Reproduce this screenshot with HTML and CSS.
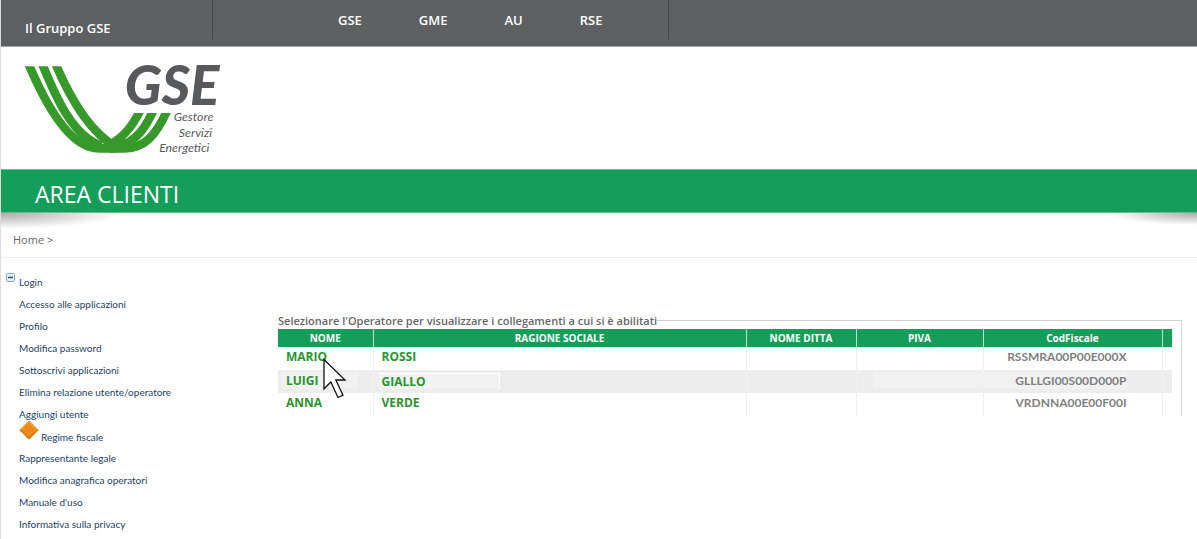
FILE: index.html
```html
<!DOCTYPE html>
<html lang="it">
<head>
<meta charset="utf-8">
<meta name="viewport" content="width=device-width, initial-scale=1">
<title>GSE - Area Clienti</title>
<link rel="stylesheet" href="styles.css">
</head>
<body>
<header>
  <div class="topbar">
    <div class="topbar-title">Il Gruppo GSE</div>
    <nav class="topbar-nav" aria-label="Gruppo">
      <a href="#">GSE</a><a href="#">GME</a><a href="#">AU</a><a href="#">RSE</a>
    </nav>
  </div>
  <div class="brand">
    <svg class="logo" viewBox="60 40 612 288" role="img" aria-label="GSE Gestore Servizi Energetici">
      <defs>
        <clipPath id="left"><rect x="60" y="50" width="340" height="280"/></clipPath>
        <clipPath id="right"><rect x="290" y="190" width="240" height="130"/></clipPath>
      </defs>
      <g fill="none" stroke="#36992a" stroke-width="26">
        <g clip-path="url(#left)">
          <path d="M82 34C130 150 205 296 296 296H345"/>
          <path d="M123 34C166 140 218 262 305 288"/>
          <path d="M163 34C205 135 264 243 345 290"/>
        </g>
        <g clip-path="url(#right)">
          <path d="M425 172C400 230 370 264 325 288"/>
          <path d="M465 172C437 234 410 276 355 290"/>
          <path d="M506 172C468 262 430 296 375 296H330"/>
        </g>
      </g>
      <text class="logo-name" x="374" y="167">GSE</text>
      <g class="logo-caption" text-anchor="end">
        <text x="640" y="215">Gestore</text>
        <text x="636" y="261">Servizi</text>
        <text x="628" y="308">Energetici</text>
      </g>
    </svg>
  </div>
  <div class="banner"><h1>AREA CLIENTI</h1></div>
</header>
<nav class="breadcrumb" aria-label="Percorso"><a href="#">Home</a> &gt;</nav>
<div class="layout">
  <nav class="sidebar" aria-label="Menu">
    <button class="toggle" aria-label="Comprimi menu" type="button">
      <svg viewBox="0 0 9 9" width="9" height="9"><rect x=".5" y=".5" width="8" height="8" rx="1" fill="#e3edf6" stroke="#7fa6cf"/><path d="M2 4.5h5" stroke="#444" stroke-width="1.4"/></svg>
    </button>
    <ul class="menu">
      <li><a href="#">Login</a></li>
      <li><a href="#">Accesso alle applicazioni</a></li>
      <li><a href="#">Profilo</a></li>
      <li><a href="#">Modifica password</a></li>
      <li><a href="#">Sottoscrivi applicazioni</a></li>
      <li><a href="#">Elimina relazione utente/operatore</a></li>
      <li><a href="#">Aggiungi utente</a></li>
      <li class="marked">
        <svg viewBox="0 0 20 20" width="20" height="20" aria-hidden="true"><path d="M10 .5 19.500 10 10 19.500.5 10Z" fill="#ee8a1c"/><path d="M10 .5 .5 10l1.500 1L10 3l8 8 1.500-1Z" fill="#f39b37"/><path d="M.5 10 10 19.500 19.500 10 18 9.500l-8 8-8-8Z" fill="#d87910"/></svg>
        <a href="#">Regime fiscale</a>
      </li>
      <li><a href="#">Rappresentante legale</a></li>
      <li><a href="#">Modifica anagrafica operatori</a></li>
      <li><a href="#">Manuale d'uso</a></li>
      <li><a href="#">Informativa sulla privacy</a></li>
    </ul>
  </nav>
  <main>
    <fieldset class="panel">
      <legend>Selezionare l'Operatore per visualizzare i collegamenti a cui si è abilitati</legend>
      <table class="operators">
        <colgroup><col class="c-name"><col><col class="c-firm"><col class="c-vat"><col class="c-code"><col class="c-end"></colgroup>
        <thead>
          <tr><th>NOME</th><th>RAGIONE SOCIALE</th><th>NOME DITTA</th><th>PIVA</th><th>CodFiscale</th><th></th></tr>
        </thead>
        <tbody>
          <tr>
            <td class="pointed"><a href="#">MARIO</a>
              <svg class="cursor" viewBox="0 0 24 41" width="24" height="41" aria-hidden="true"><path d="M1 1.500V31l6.800-7L15 39.500l5-2.300L12.800 22H22Z" fill="#fff" stroke="#111" stroke-width="1.300"/></svg>
            </td>
            <td><a href="#">ROSSI</a></td><td></td><td></td><td class="code">RSSMRA00P00E000X</td><td></td>
          </tr>
          <tr>
            <td><a class="patch patch-name" href="#">LUIGI</a></td>
            <td><a class="patch patch-firm" href="#">GIALLO</a></td><td></td>
            <td><span class="patch patch-vat"></span></td>
            <td class="code"><span class="patch patch-code">GLLLGI00S00D000P</span></td><td></td>
          </tr>
          <tr><td><a href="#">ANNA</a></td><td><a href="#">VERDE</a></td><td></td><td></td><td class="code">VRDNNA00E00F00I</td><td></td></tr>
        </tbody>
      </table>
    </fieldset>
  </main>
</div>
</body>
</html>
```
FILE: styles.css
```css
* { box-sizing: border-box; }
body {
  min-height: 100vh;
  margin: 0;
  border-left: 1px solid #dcdcdc;
  background: #fff;
  color: #666;
  font-family: "Open Sans", "Noto Sans", sans-serif;
  font-size: 12px;
}
a { color: inherit; text-decoration: none; }

.topbar {
  display: flex;
  align-items: flex-start;
  height: 47px;
  background: #5e5f61;
  border-bottom: 1px solid #a5a5a6;
  color: #fff;
  font-size: 13px;
  font-weight: 600;
  line-height: 16px;
}
.topbar-title, .topbar-nav { height: 39px; border-right: 1px solid #47484a; }
.topbar-title { width: 212px; padding: 20px 0 0 24px; }
.topbar-nav { display: flex; gap: 57px; width: 456px; padding: 12px 0 0 125px; }

.brand { height: 122px; padding: 16px 0 0 19px; }
.logo { display: block; width: 204px; height: 96px; overflow: visible; }
.logo-name { font: italic 900 164px Lato, sans-serif; fill: #58595b; }
.logo-caption { font: italic 400 37px Lato, sans-serif; fill: #58595b; }

.banner {
  height: 44px;
  margin-left: -1px;
  padding-left: 35px;
  background: #149e5a;
  border-top: 1px solid #62be90;
  border-bottom: 1px solid #62be90;
}
h1 { margin: 0; color: #fff; font-size: 23px; font-weight: 400; line-height: 48px; }

.breadcrumb {
  height: 45px;
  padding: 19px 0 0 12px;
  border-bottom: 1px solid #eee;
  background:
    radial-gradient(ellipse 120px 16px at 0 0, #0005, #0000) left top / 120px 16px no-repeat,
    radial-gradient(ellipse 90px 12px at 100% 0, #0005, #0000) right top / 90px 12px no-repeat;
  font-size: 11px;
  line-height: 16px;
}

.layout { display: grid; grid-template-columns: 277px minmax(0, 1fr); }
.sidebar { display: flex; align-items: flex-start; padding: 13px 0 0 5px; color: #1c3f63; }
.toggle { display: flex; margin: 2px 4px 0 0; padding: 0; border: 0; background: none; }
.menu { margin: 0; padding: 0; list-style: none; font-family: Lato, sans-serif; font-size: 10px; line-height: 22px; }
.marked { display: flex; align-items: flex-start; gap: 2px; height: 22px; line-height: 24px; }
.marked svg { margin-top: -5px; }

main { padding: 54px 15px 0 0; }
.panel {
  min-width: 0;
  margin: 0;
  padding: 0 9px 0 0;
  border: solid #d3d3d3;
  border-width: 1px 1px 0 0;
}
legend { padding: 0; font-size: 11px; font-weight: 600; line-height: 17px; }
.operators { width: 100%; table-layout: fixed; border-collapse: collapse; }
.c-name { width: 95px; }
.c-firm { width: 110px; }
.c-vat { width: 127px; }
.c-code { width: 179px; }
.c-end { width: 10px; }
th {
  height: 18px;
  padding: 0;
  border-right: 1px solid #b9e0cb;
  background: #149e5a;
  color: #fff;
  font-size: 10px;
  font-weight: 700;
  line-height: 18px;
}
td {
  height: 23px;
  padding: 0 0 0 8px;
  border-right: 1px solid #f0f0f0;
  color: #29952c;
  font-size: 12px;
  font-weight: 700;
  line-height: 20px;
  vertical-align: top;
}
th:last-child, td:last-child { border-right: 0; }
tr:nth-child(even) td { background: #ededed; }
.code { padding-right: 35px; color: #7f7f7f; font-family: Lato, sans-serif; font-size: 12px; text-align: right; }
.pointed { position: relative; }
.cursor { position: absolute; left: 45px; top: 11px; z-index: 1; }
.patch { display: block; height: 16px; margin-top: 3px; background: #f1f1f1; line-height: 16px; }
.patch-name { margin-left: -4px; margin-right: 15px; padding-left: 4px; }
.patch-firm { width: 122px; margin-left: -4px; padding-left: 4px; border: solid #fff; border-width: 1px 1px 0 0; }
.patch-vat { margin-left: 8px; }
.patch-code { margin-left: -8px; }
```
